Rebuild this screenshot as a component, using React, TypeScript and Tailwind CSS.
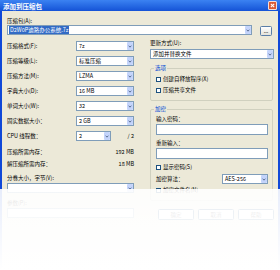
import type { ReactNode } from "react";

const font = { fontFamily: '"Noto Sans CJK SC", "Noto Sans", sans-serif' };

function Arrow() {
  return (
    <span className="flex h-[8px] w-[6px] shrink-0 items-center justify-center rounded-[1px] bg-[#C4D4FB]">
      <svg viewBox="0 0 6 4" className="h-[3px] w-[4px]">
        <path d="M1 0.8 L3 3 L5 0.8" stroke="#4D6185" fill="none" strokeWidth="1.3" />
      </svg>
    </span>
  );
}

function Combo({ value, className = "" }: { value?: ReactNode; className?: string }) {
  return (
    <div className={`flex h-[10px] items-center border border-[#7F9DB9] bg-white ${className}`}>
      <span className="min-w-0 flex-1 whitespace-nowrap pl-[2px] leading-[8px]">{value}</span>
      <Arrow />
    </div>
  );
}

function Check({ label }: { label: string }) {
  return (
    <div className="flex h-[8px] items-center gap-[2px]">
      <span className="h-[5px] w-[5px] shrink-0 border border-[#1C5180] bg-white" />
      <span>{label}</span>
    </div>
  );
}

function Row({ label, children }: { label: string; children: ReactNode }) {
  return (
    <div className="flex h-[10px] items-center">
      <span className="w-[69px] shrink-0">{label}</span>
      {children}
    </div>
  );
}

export default function App() {
  return (
    <div
      className="relative h-[270px] w-[280px] overflow-hidden bg-[#ECE9D8] text-[5.5px] leading-[8px] text-black"
      style={font}
    >
      {/* title bar */}
      <div className="flex h-[11px] items-center justify-between bg-linear-to-b from-[#3B82F2] to-[#1552D6] pl-[3px] pr-[3px]">
        <span className="text-[6.5px] font-bold leading-[8px] text-white">添加到压缩包</span>
        <span className="flex h-[9px] w-[9px] items-center justify-center rounded-[1.5px] border border-white/80 bg-[#DA5A33]">
          <svg viewBox="0 0 6 6" className="h-[5px] w-[5px]">
            <path d="M1 1 L5 5 M5 1 L1 5" stroke="white" strokeWidth="1.3" />
          </svg>
        </span>
      </div>

      <div className="h-[259px] border-x-2 border-[#1048D8] pl-[5px] pr-[4px]">
        <div className="pt-[6px]">压缩包(A):</div>
        <div className="flex items-start">
          <div className="flex h-[10px] w-[245px] items-center border border-[#7F9DB9] bg-white">
            <span className="min-w-0 flex-1 whitespace-nowrap pl-[1px] leading-[8px]">
              <span className="bg-[#316AC5] px-[1px] text-white">D2W0P迪路办公系统.7z</span>
            </span>
            <Arrow />
          </div>
          <div className="ml-[8px] mt-[1px] flex h-[10px] w-[12px] items-center justify-center rounded-[1.5px] border border-[#5A7EA8] bg-linear-to-b from-white to-[#E3E3DB]">
            ...
          </div>
        </div>

        <div className="mt-[3px] flex gap-[16px]">
          {/* left column */}
          <div className="flex w-[127px] flex-col pt-[2px]">
            <div className="flex flex-col gap-[5px]">
              <Row label="压缩格式(F):">
                <Combo value="7z" className="flex-1" />
              </Row>
              <Row label="压缩等级(L):">
                <Combo value="标准压缩" className="flex-1" />
              </Row>
              <Row label="压缩方法(M):">
                <Combo value="LZMA" className="flex-1" />
              </Row>
              <Row label="字典大小(D):">
                <Combo value="16 MB" className="flex-1" />
              </Row>
              <Row label="单词大小(W):">
                <Combo value="32" className="flex-1" />
              </Row>
              <Row label="固实数据大小：">
                <Combo value="2 GB" className="flex-1" />
              </Row>
              <Row label="CPU 线程数：">
                <Combo value="2" className="w-[35px]" />
                <span className="ml-auto">/ 2</span>
              </Row>
            </div>
            <div className="mt-[7px] flex justify-between">
              <span>压缩所需内存：</span>
              <span>192 MB</span>
            </div>
            <div className="mt-[4px] flex justify-between">
              <span>解压缩所需内存：</span>
              <span>18 MB</span>
            </div>
            <div className="mt-[6px]">分卷大小，字节(V):</div>
            <Combo value="" className="mt-[1px] w-full" />
            <div className="mt-[6px]">参数(P):</div>
            <div className="mt-[1px] h-[10px] border border-[#7F9DB9] bg-white" />
          </div>

          {/* right column */}
          <div className="flex w-[124px] flex-col">
            <div>更新方式(U):</div>
            <Combo value="添加并替换文件" className="mt-[2px] w-full" />

            <fieldset className="mt-[5px] w-[123px] rounded-[2px] border border-[#D0D0BF] pb-[6px] pl-[5px] pr-[4px]">
              <legend className="-ml-[2px] px-[1px] text-[#0046D5]">选项</legend>
              <div className="flex flex-col gap-[3px] pt-[3px]">
                <Check label="创建自释放程序(X)" />
                <Check label="压缩共享文件" />
              </div>
            </fieldset>

            <fieldset className="mt-[4px] w-[123px] rounded-[2px] border border-[#D0D0BF] pb-[6px] pl-[5px] pr-[4px]">
              <legend className="-ml-[2px] px-[1px] text-[#0046D5]">加密</legend>
              <div className="flex flex-col pt-[2px]">
                <div>输入密码：</div>
                <div className="mt-[1px] h-[11px] w-[112px] border border-[#7F9DB9] bg-white" />
                <div className="mt-[4px]">重新输入：</div>
                <div className="mt-[1px] h-[11px] w-[112px] border border-[#7F9DB9] bg-white" />
                <div className="mt-[4px]">
                  <Check label="显示密码(S)" />
                </div>
                <div className="mt-[3px] flex h-[10px] w-[112px] items-center justify-between">
                  <span>加密算法：</span>
                  <Combo value="AES-256" className="w-[46px]" />
                </div>
                <div className="mt-[2px]">
                  <Check label="加密文件名(N)" />
                </div>
              </div>
            </fieldset>

            <div className="mt-[8px] flex justify-end gap-[4px]">
              <span className="flex h-[11px] w-[36px] items-center justify-center rounded-[1.5px] border border-[#003C74] bg-white">确定</span>
              <span className="flex h-[11px] w-[36px] items-center justify-center rounded-[1.5px] border border-[#003C74] bg-white">取消</span>
              <span className="flex h-[11px] w-[36px] items-center justify-center rounded-[1.5px] border border-[#003C74] bg-white">帮助</span>
            </div>
          </div>
        </div>
      </div>

      {/* fade overlay */}
      <div className="pointer-events-none absolute inset-x-0 top-[189px] bottom-0 bg-linear-to-b from-white/90 to-white" />
    </div>
  );
}
